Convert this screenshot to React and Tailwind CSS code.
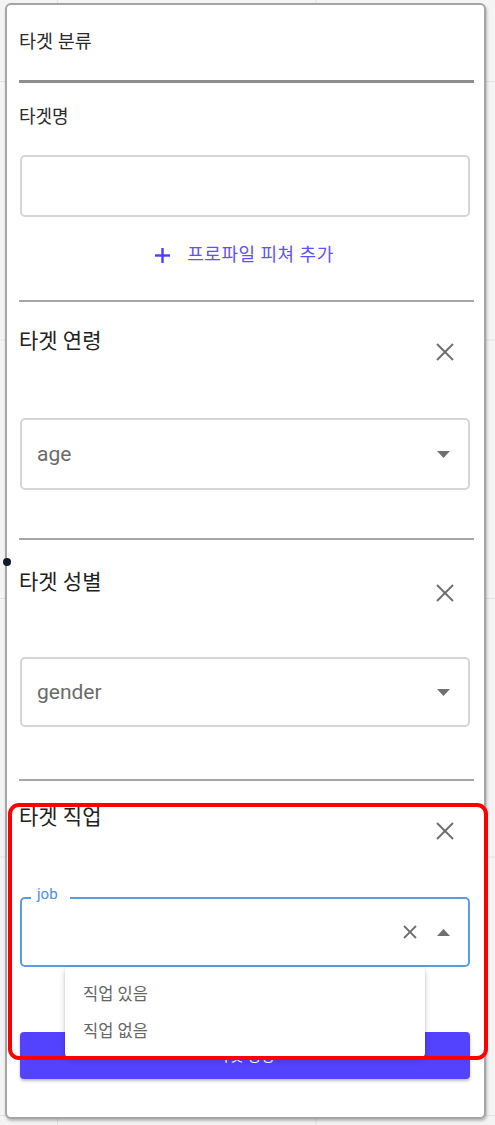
import React from "react";

function XIcon({ size = 18, stroke = 2, color = "#6f6f6f" }) {
  return (
    <svg width={size} height={size} viewBox={`0 0 ${size} ${size}`} className="shrink-0">
      <line x1="1" y1="1" x2={size - 1} y2={size - 1} stroke={color} strokeWidth={stroke} />
      <line x1={size - 1} y1="1" x2="1" y2={size - 1} stroke={color} strokeWidth={stroke} />
    </svg>
  );
}

function Caret({ up = false }) {
  return (
    <svg width="13" height="7" viewBox="0 0 13 7" className="shrink-0">
      {up ? (
        <polygon points="0,7 6.5,0 13,7" fill="#707070" />
      ) : (
        <polygon points="0,0 13,0 6.5,7" fill="#707070" />
      )}
    </svg>
  );
}

function Divider({ thick = false, className = "" }) {
  return (
    <div
      className={
        (thick ? "h-[3px] bg-[#8e8e8e] " : "h-[2px] bg-[#a6a6a6] ") + className
      }
    />
  );
}

function TitleRow({ title, mt, xMt }) {
  return (
    <div className={"flex items-start justify-between pr-[20px] " + mt}>
      <div className="text-[21px] leading-[24px] text-[#212121]">{title}</div>
      <div className={xMt}>
        <XIcon />
      </div>
    </div>
  );
}

function SelectBox({ value, h, mt }) {
  return (
    <div
      className={
        "ml-[1px] mr-[4px] border-2 border-[#d6d6d6] rounded-[5px] flex items-center justify-between pl-[15px] pr-[18px] " +
        h +
        " " +
        mt
      }
    >
      <span className="text-[21px] leading-[24px] text-[#6b6b6b]">{value}</span>
      <Caret />
    </div>
  );
}

export default function App() {
  return (
    <div className="relative w-[495px] h-[1125px] overflow-hidden bg-[#f4f4f4] [background-image:linear-gradient(to_right,#e2e2e2_1px,transparent_1px),linear-gradient(to_bottom,#e2e2e2_1px,transparent_1px)] [background-size:258.5px_258.5px] [background-position:57px_81px] pt-[3px] pl-[5px] font-[Roboto,'Noto_Sans_CJK_KR',sans-serif]">
      <div className="w-[481px] h-[1116px] bg-white border-2 border-[#a5a5a5] rounded-[6px] shadow-[1px_2px_3px_rgba(0,0,0,0.25)] pt-[25px] pl-[12px] pr-[10px]">
        <div className="text-[18.5px] leading-[24px] text-[#2a2a2a]">타겟 분류</div>
        <Divider thick className="mt-[26px]" />
        <div className="mt-[22px] text-[18px] leading-[24px] text-[#2a2a2a]">타겟명</div>
        <div className="mt-[26px] ml-[1px] mr-[4px] h-[62px] border-2 border-[#d6d6d6] rounded-[5px]" />
        <div className="mt-[26px] flex items-center justify-center gap-[17px] pr-[4px]">
          <svg width="15" height="15" viewBox="0 0 15 15">
            <line x1="7.5" y1="0" x2="7.5" y2="15" stroke="#4b3cff" strokeWidth="2.4" />
            <line x1="0" y1="7.5" x2="15" y2="7.5" stroke="#4b3cff" strokeWidth="2.4" />
          </svg>
          <span className="text-[18px] leading-[24px] tracking-[0.5px] text-[#5f51ff]">프로파일 피쳐 추가</span>
        </div>
        <Divider className="mt-[33px]" />

        <TitleRow title="타겟 연령" mt="mt-[27px]" xMt="mt-[14px]" />
        <SelectBox value="age" h="h-[72px]" mt="mt-[57px]" />
        <Divider className="mt-[48px]" />

        <TitleRow title="타겟 성별" mt="mt-[30px]" xMt="mt-[14px]" />
        <SelectBox value="gender" h="h-[70px]" mt="mt-[55px]" />
        <Divider className="mt-[52px]" />

        <TitleRow title="타겟 직업" mt="mt-[24px]" xMt="mt-[17px]" />
        <div className="relative mt-[57px] ml-[1px] mr-[4px] h-[70px] border-2 border-[#5b9be3] rounded-[5px] flex items-center justify-end gap-[20px] pr-[18px]">
          <span className="absolute top-[-15px] left-[9px] bg-white pl-[6px] pr-[12px] text-[15px] leading-[20px] text-[#4a8fe0]">
            job
          </span>
          <XIcon size={14} stroke={1.8} />
          <Caret up />
        </div>
        <div className="mt-[65px] ml-[1px] mr-[4px] h-[47px] bg-[#5343ff] rounded-[4px] shadow-[0_2px_3px_rgba(0,0,0,0.25)] flex items-center justify-center">
          <span className="text-[15px] leading-[20px] text-white">타겟 생성</span>
        </div>
      </div>

      {/* dropdown menu */}
      <div className="absolute left-[65px] top-[967px] w-[360px] h-[90px] bg-white rounded-[4px] shadow-[0_3px_6px_rgba(0,0,0,0.2),0_1px_2px_rgba(0,0,0,0.15)] flex flex-col pt-[16px] pl-[18px]">
        <div className="h-[37px] text-[16.5px] leading-[24px] text-[#666]">직업 있음</div>
        <div className="h-[37px] text-[16.5px] leading-[24px] text-[#666]">직업 없음</div>
      </div>

      {/* annotation dot */}
      <div className="absolute left-[3px] top-[558px] w-[8px] h-[8px] rounded-full bg-[#111827]" />

      {/* red annotation box */}
      <div className="absolute left-[8px] top-[803px] w-[480px] h-[257px] border-4 border-[#ff0000] rounded-[11px]" />
    </div>
  );
}
